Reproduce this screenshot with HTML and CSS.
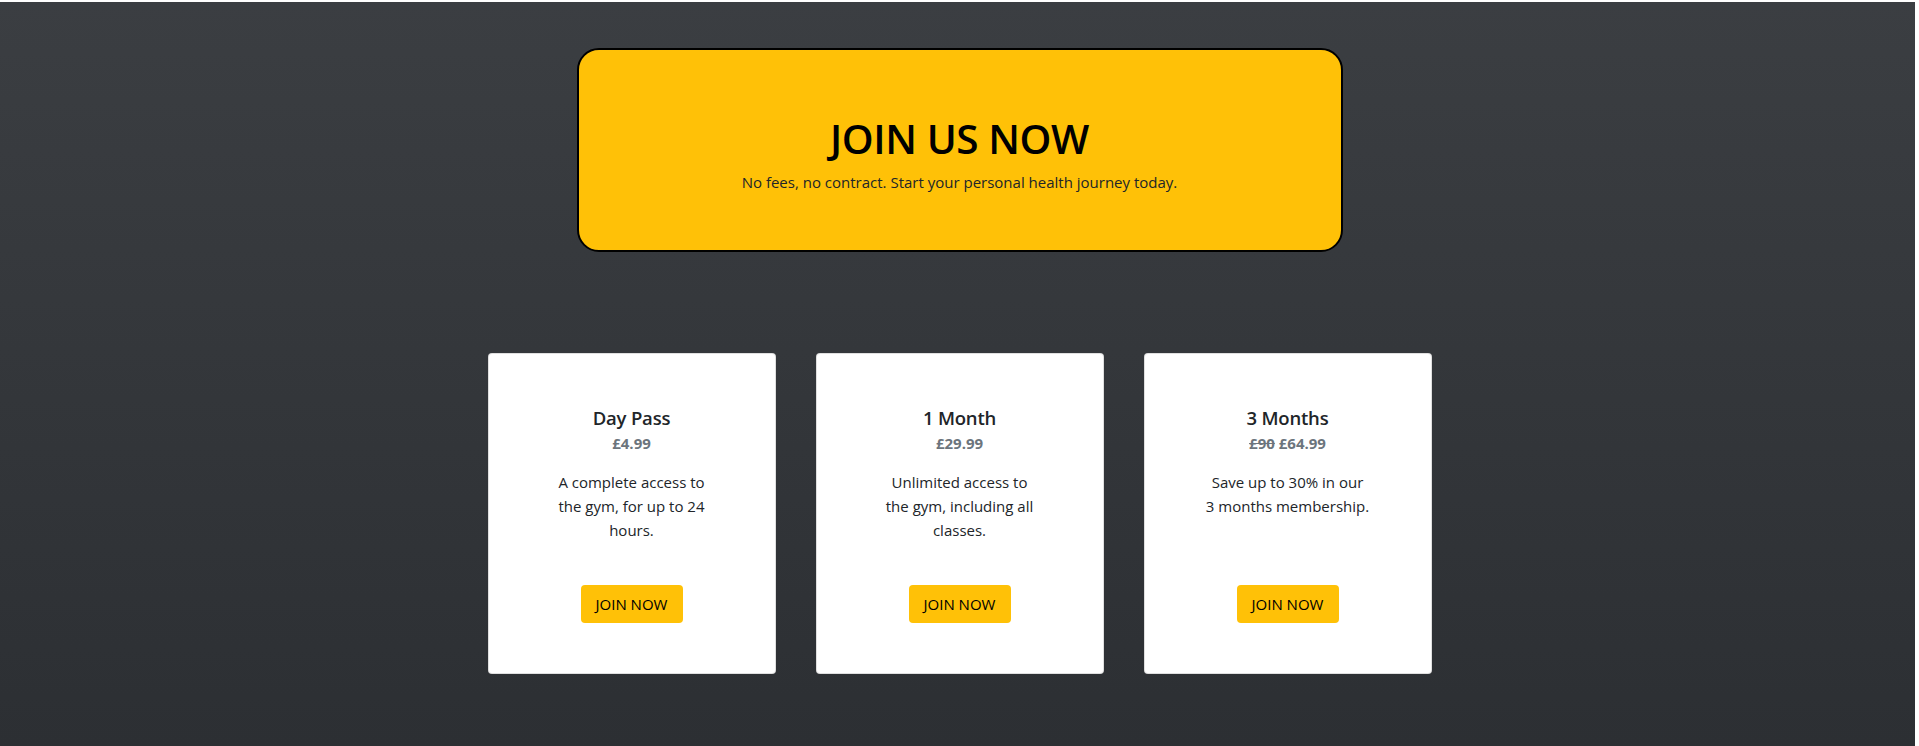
FILE: index.html
```html
<!DOCTYPE html>
<html lang="en">
<head>
<meta charset="utf-8">
<title>Join Us</title>
<link rel="stylesheet" href="styles.css">
</head>
<body>
<section class="join">
  <div class="banner">
    <h1 class="banner-title">JOIN US NOW</h1>
    <p class="banner-text">No fees, no contract. Start your personal health journey today.</p>
  </div>
  <div class="plans">
    <div class="card">
      <h5 class="card-title">Day Pass</h5>
      <h6 class="card-price">£4.99</h6>
      <p class="card-text">A complete access to<br>the gym, for up to 24<br>hours.</p>
      <a class="btn" href="#">JOIN NOW</a>
    </div>
    <div class="card">
      <h5 class="card-title">1 Month</h5>
      <h6 class="card-price">£29.99</h6>
      <p class="card-text">Unlimited access to<br>the gym, including all<br>classes.</p>
      <a class="btn" href="#">JOIN NOW</a>
    </div>
    <div class="card">
      <h5 class="card-title">3 Months</h5>
      <h6 class="card-price"><s>£90</s> £64.99</h6>
      <p class="card-text">Save up to 30% in our<br>3 months membership.</p>
      <a class="btn" href="#">JOIN NOW</a>
    </div>
  </div>
</section>
</body>
</html>
```

FILE: styles.css
```css
* { box-sizing: border-box; }
html, body { margin: 0; padding: 0; }
body {
  background: #ffffff;
  font-family: "Open Sans", "Noto Sans", Arial, sans-serif;
  color: #212529;
}
.join {
  margin: 2px 4px 0 0;
  padding: 46px 0 0 4px;
  height: 744px;
  background: linear-gradient(180deg, #3b3e42 0%, #2c2f33 100%);
  display: flex;
  flex-direction: column;
  align-items: center;
}
.banner {
  width: 766px;
  height: 204px;
  background: #ffc107;
  border: 2px solid #000;
  border-radius: 22px;
  display: flex;
  flex-direction: column;
  align-items: center;
  padding-top: 65px;
}
.banner-title {
  margin: 0;
  font-size: 40.5px;
  font-weight: 600;
  line-height: 48px;
  color: #000;
  letter-spacing: -0.4px;
}
.banner-text {
  margin: 7px 0 0;
  font-size: 15px;
  line-height: 24px;
  color: #212529;
}
.plans {
  margin-top: 101px;
  display: flex;
  gap: 40px;
}
.card {
  width: 288px;
  height: 321px;
  background: #fff;
  border-radius: 4px;
  border: 1px solid rgba(0,0,0,.125);
  display: flex;
  flex-direction: column;
  align-items: center;
  padding: 52px 0 50px;
}
.card-title {
  margin: 0;
  font-size: 18.5px;
  font-weight: 600;
  line-height: 23px;
  color: #212529;
  letter-spacing: -0.2px;
}
.card-price {
  margin: 5px 0 0;
  font-size: 15px;
  font-weight: 700;
  line-height: 18px;
  color: #6c757d;
}
.card-price s { font-weight: 700; }
.card-text {
  margin: 18px 0 0;
  text-align: center;
  font-size: 15px;
  line-height: 24px;
  color: #212529;
}
.btn {
  margin-top: auto;
  display: inline-block;
  background: #ffc107;
  color: #000;
  text-decoration: none;
  font-size: 15px;
  line-height: 24px;
  padding: 7px 0;
  border-radius: 4px;
  width: 102px;
  text-align: center;
}
```
